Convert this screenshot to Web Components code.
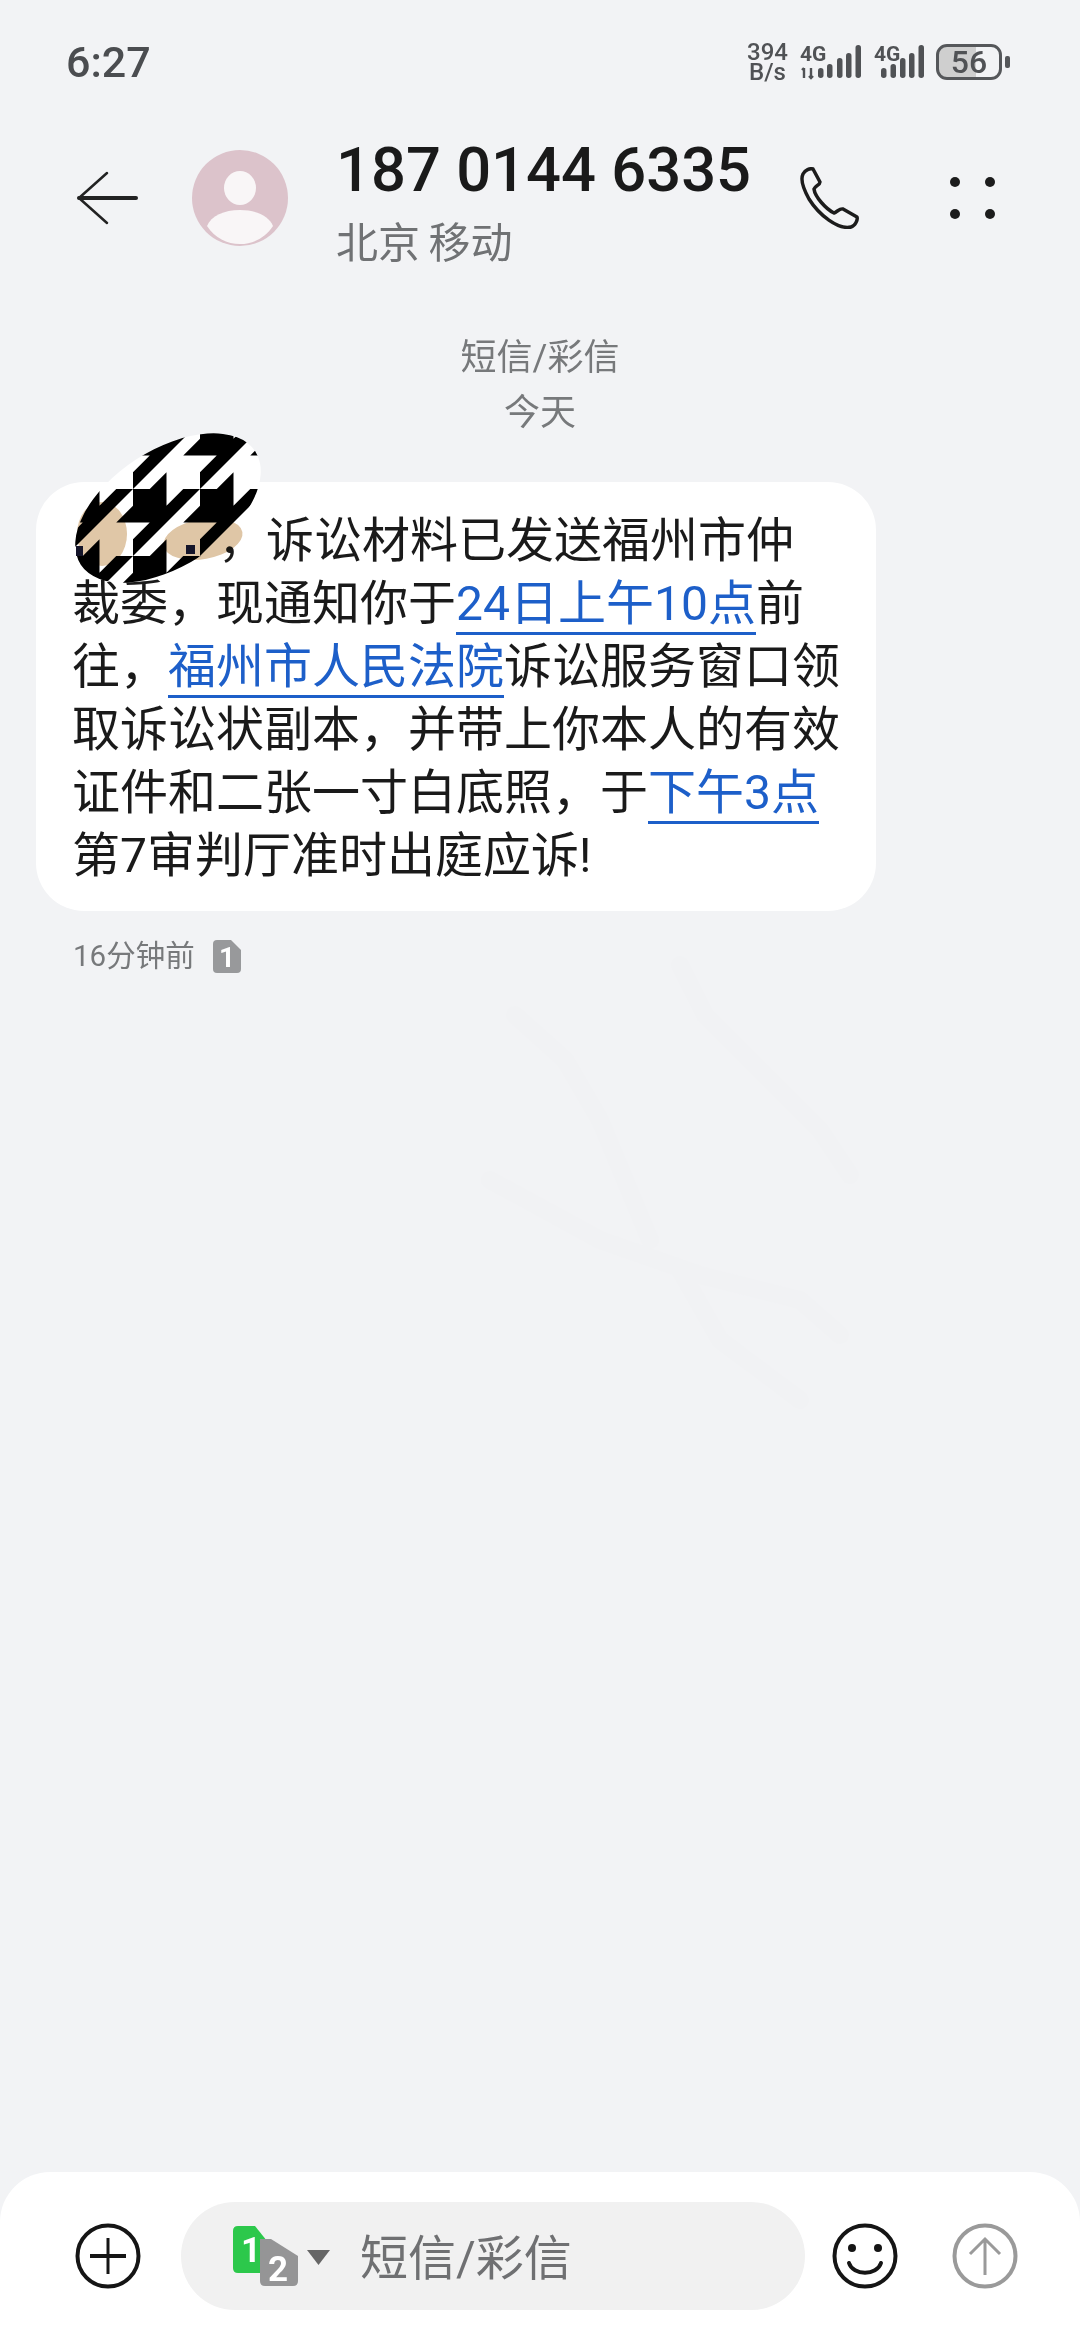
<!DOCTYPE html>
<html lang="zh">
<head>
<meta charset="utf-8">
<title>短信</title>
<style>
html, body { margin: 0; padding: 0; background: #f2f3f5; }
body { font-family: Roboto, "Noto Sans CJK SC", sans-serif; }
</style>
</head>
<body>
<sms-screen>
  <status-bar slot="top" time="6:27" speed="394" level="56"></status-bar>
  <thread-header slot="top" number="187 0144 6335" place="北京 移动"></thread-header>
  <day-label>短信/彩信</day-label>
  <day-label>今天</day-label>
  <message-bubble time="16分钟前">
    <span class="name"></span>，诉讼材料已发送福州市仲<br>裁委，现通知你于<msg-link>24日上午10点</msg-link>前往，<msg-link>福州市人民法院</msg-link>诉讼服务窗口领取诉讼状副本，并带上你本人的有效证件和二张一寸白底照，于<msg-link>下午3点</msg-link>第7审判厅准时出庭应诉!
  </message-bubble>
  <message-composer slot="bottom" placeholder="短信/彩信"></message-composer>
</sms-screen>

<script>
class SmsScreen extends HTMLElement {
  constructor() {
    super();
    const shadowRoot = this.attachShadow({mode: 'open'});
    shadowRoot.innerHTML = `
<style>
:host {
  display: flex;
  flex-direction: column;
  position: relative;
  width: 1080px;
  height: 2340px;
  overflow: hidden;
  background: #f2f3f5;
  font-family: Roboto, "Noto Sans CJK SC", sans-serif;
}
main {
  flex: 1;
  display: flex;
  flex-direction: column;
  padding-top: 59px;
}
.watermark { position: absolute; left: 0; top: 0; }
</style>
<svg class="watermark" width="1080" height="2340" fill="none" stroke="#f1f2f4" stroke-width="18" stroke-linecap="round" stroke-linejoin="round">
  <path d="M515 1015 565 1060 600 1120 650 1240"/>
  <path d="M680 965 705 1015 770 1080 820 1130 850 1175"/>
  <path d="M490 1180 600 1240 700 1275 800 1300 840 1335"/>
  <path d="M680 1270 720 1340 800 1400"/>
</svg>
<slot name="top"></slot>
<main><slot></slot></main>
<slot name="bottom"></slot>
`;
  }
}

class StatusBar extends HTMLElement {
  constructor() {
    super();
    const shadowRoot = this.attachShadow({mode: 'open'});
    const bars = (xs) => xs.map(([x, top]) =>
      `<rect x="${x}" y="${top}" width="5.5" height="${34 - top}" rx="2.7"/>`).join('');
    shadowRoot.innerHTML = `
<style>
:host {
  display: flex;
  align-items: center;
  justify-content: space-between;
  height: 124px;
  padding: 0 70px 0 66px;
  box-sizing: border-box;
  color: #505255;
}
.time { font-size: 43px; font-weight: 500; color: #4b4d50; }
.right { display: flex; align-items: center; gap: 12px; }
.speed {
  display: flex;
  flex-direction: column;
  align-items: center;
  font-size: 24px;
  line-height: 20px;
  font-weight: 500;
}
svg { display: block; fill: #505255; overflow: visible; }
svg text { font: 700 21px Roboto, sans-serif; }
.battery {
  position: relative;
  box-sizing: border-box;
  width: 66px;
  height: 36px;
  border: 3.5px solid #55575a;
  border-radius: 11px;
  display: flex;
  align-items: center;
  justify-content: center;
  font-size: 32px;
  font-weight: 500;
  background: linear-gradient(to right, #cfcfcf 62%, transparent 62%);
}
.nub { width: 5px; height: 12px; border-radius: 2px; background: #55575a; margin-left: -9px; }
</style>
<span class="time">${this.getAttribute('time')}</span>
<div class="right">
  <div class="speed"><span>${this.getAttribute('speed')}</span><span>B/s</span></div>
  <svg width="62" height="36" viewBox="0 0 62 36">
    <text x="0" y="17">4G</text>
    <path d="M4 24v10M2 26l2-2M11 24v10M9 32l2 2 2-2" stroke="#505255" stroke-width="2.4" fill="none"/>
    <g>${bars([[18, 24], [27, 20], [37, 14], [46, 9], [55.5, 1]])}</g>
  </svg>
  <svg width="50" height="36" viewBox="0 0 50 36">
    <text x="0" y="17">4G</text>
    <g>${bars([[7, 24], [16.5, 20], [26, 14], [35, 9], [44.5, 1]])}</g>
  </svg>
  <div class="battery">${this.getAttribute('level')}</div>
  <div class="nub"></div>
</div>
`;
  }
}

class ThreadHeader extends HTMLElement {
  constructor() {
    super();
    const shadowRoot = this.attachShadow({mode: 'open'});
    shadowRoot.innerHTML = `
<style>
:host {
  display: flex;
  align-items: center;
  height: 148px;
  padding-left: 76px;
  box-sizing: border-box;
}
svg { display: block; flex: none; }
.avatar { margin-left: 54px; }
.info { margin-left: 48px; width: 464px; }
.number {
  font-size: 61.5px;
  line-height: 70px;
  font-weight: 500;
  color: #1a1a1a;
  white-space: nowrap;
  margin-top: 8px;
}
.place { font-size: 42px; line-height: 52px; color: #707274; margin-top: 13px; word-spacing: -2px; }
.more { margin-left: 88px; }
</style>
<svg width="62" height="56" viewBox="0 0 62 56" fill="none" stroke="#222" stroke-linecap="round">
  <path d="M31 3 3 28" stroke-width="2.5"/>
  <path d="M3 28 31 53" stroke-width="2.5"/>
  <path d="M3 28H60" stroke-width="4"/>
</svg>
<svg class="avatar" width="96" height="96" viewBox="0 0 96 96">
  <circle cx="48" cy="48" r="48" fill="#dcc3cb"/>
  <ellipse cx="48" cy="38" rx="16" ry="17" fill="#f9f6f7"/>
  <path d="M15 76C19 66 32 60 48 60S77 66 81 76C73 88 61 94 48 94S23 88 15 76Z" fill="#f9f6f7"/>
</svg>
<div class="info">
  <div class="number">${this.getAttribute('number')}</div>
  <div class="place">${this.getAttribute('place')}</div>
</div>
<svg width="62" height="62" viewBox="0 0 62 62" fill="none" stroke="#1c1c1c" stroke-width="3.5" stroke-linejoin="round">
  <path d="M3 7C5 3 10 1 13 2L20 15C20 18 15 19 14 22C15 30 26 42 34 46C37 45 40 41 43 42L57 50C58 53 55 59 51 60C38 63 19 48 9 32C4 23 0 13 3 7Z"/>
</svg>
<svg class="more" width="46" height="44" viewBox="0 0 46 44" fill="#1c1c1c">
  <circle cx="5" cy="6" r="5"/><circle cx="40" cy="6" r="5"/>
  <circle cx="5" cy="38" r="5"/><circle cx="40" cy="38" r="5"/>
</svg>
`;
  }
}

class DayLabel extends HTMLElement {
  constructor() {
    super();
    const shadowRoot = this.attachShadow({mode: 'open'});
    shadowRoot.innerHTML = `
<style>
:host {
  display: block;
  text-align: center;
  font-size: 36px;
  line-height: 55px;
  color: #77797b;
}
</style>
<slot></slot>
`;
  }
}

class MsgLink extends HTMLElement {
  constructor() {
    super();
    const shadowRoot = this.attachShadow({mode: 'open'});
    // 改行を入れると空白が出るので詰めて書く
    shadowRoot.innerHTML = `<style>
:host {
  color: #1d5fc9;
  border-bottom: 3px solid #1d5fc9;
}
</style><slot></slot>`;
  }
}

class MessageBubble extends HTMLElement {
  constructor() {
    super();
    const shadowRoot = this.attachShadow({mode: 'open'});
    shadowRoot.innerHTML = `
<style>
:host {
  display: block;
  position: relative;
  margin: 41px 0 0 36px;
  width: 840px;
}
.bubble {
  box-sizing: border-box;
  background: #fff;
  border-radius: 48px;
  padding: 27px 30px 24px 36px;
  font-size: 48px;
  line-height: 63px;
  color: #1a1a1a;
}
::slotted(.name) { display: inline-block; width: 146px; }
.time {
  display: flex;
  align-items: center;
  gap: 18px;
  margin: 25px 0 0 37px;
  font-size: 29.5px;
  line-height: 40px;
  color: #77797b;
}
.mosaic { position: absolute; left: 30px; top: -50px; }
</style>
<div class="bubble"><slot></slot></div>
<div class="time">
  <span>${this.getAttribute('time')}</span>
  <svg width="28" height="33" viewBox="0 0 28 33" style="overflow:visible">
    <path d="M4 0H18L28 10V29Q28 33 24 33H4Q0 33 0 29V4Q0 0 4 0Z" fill="#98999b"/>
    <text x="14" y="27" text-anchor="middle" font-family="Roboto, sans-serif" font-size="28" font-weight="700" fill="#fff">1</text>
  </svg>
</div>
<svg class="mosaic" width="210" height="160" viewBox="0 0 210 160">
  <defs>
    <pattern id="tooth" width="67" height="67" patternUnits="userSpaceOnUse" patternTransform="translate(0,57)">
      <rect width="67" height="67" fill="#fff"/>
      <path d="M0 0H33.5V33.5H0Z M33.5 16.75 50.25 0H67L33.5 33.5Z M50.25 33.5 67 16.75V33.5Z M0 50.25 16.75 33.5H33.5L0 67Z M16.75 67 33.5 50.25V67Z"/>
    </pattern>
    <clipPath id="blot"><ellipse cx="102" cy="76" rx="104" ry="58" transform="rotate(-33 102 76)"/></clipPath>
  </defs>
  <g clip-path="url(#blot)"><rect width="210" height="160" fill="url(#tooth)"/></g>
  <g style="mix-blend-mode:multiply">
    <ellipse cx="36" cy="102" rx="25" ry="32" fill="#e0c7a7"/>
    <ellipse cx="137" cy="107" rx="40" ry="20" transform="rotate(-10 137 107)" fill="#dfc6a6"/>
  </g>
  <rect x="120" y="113" width="9" height="9" fill="#15152a"/>
  <rect x="10" y="114" width="7" height="10" fill="#15152a"/>
</svg>
`;
  }
}

class MessageComposer extends HTMLElement {
  constructor() {
    super();
    const shadowRoot = this.attachShadow({mode: 'open'});
    shadowRoot.innerHTML = `
<style>
:host {
  display: flex;
  align-items: flex-start;
  height: 168px;
  padding: 30px 64px 0 75px;
  box-sizing: border-box;
  background: #fff;
  border-radius: 50px 50px 0 0;
}
svg { display: block; flex: none; overflow: visible; }
.round { margin-top: 21px; }
.field {
  flex: none;
  width: 624px;
  height: 108px;
  margin: 0 27px 0 40px;
  padding-left: 52px;
  box-sizing: border-box;
  display: flex;
  align-items: center;
  border-radius: 54px;
  background: #f1f1f1;
  font-size: 48px;
  color: #6f7072;
}
.field span { margin-left: 30px; padding-bottom: 4px; }
.send { margin-left: 54px; }
</style>
<svg class="round" width="66" height="66" viewBox="0 0 66 66" fill="none" stroke="#151515">
  <circle cx="33" cy="33" r="30.5" stroke-width="4"/>
  <path d="M15 33H51" stroke-width="4"/>
  <path d="M33 15V51" stroke-width="3"/>
</svg>
<div class="field">
  <svg width="97" height="60" viewBox="0 0 97 60">
    <path d="M5 0H22L38 20V42Q38 47 33 47H5Q0 47 0 42V5Q0 0 5 0Z" fill="#2cc84b"/>
    <path d="M27 13H38L65 30V55Q65 60 60 60H32Q27 60 27 55Z" fill="#959596"/>
    <text x="18" y="36" text-anchor="middle" font-family="Roboto, sans-serif" font-size="35" font-weight="700" fill="#fff">1</text>
    <text x="45" y="55" text-anchor="middle" font-family="Roboto, sans-serif" font-size="35" font-weight="700" fill="#fff">2</text>
    <path d="M74 24H97L85.5 39Z" fill="#666"/>
  </svg>
  <span>${this.getAttribute('placeholder')}</span>
</div>
<svg class="round" width="66" height="66" viewBox="0 0 66 66" fill="none" stroke="#151515" stroke-width="4">
  <circle cx="33" cy="33" r="30.5"/>
  <circle cx="20" cy="25" r="4" fill="#151515" stroke="none"/>
  <circle cx="46" cy="25" r="4" fill="#151515" stroke="none"/>
  <path d="M17 40C21 53 45 53 49 40" stroke-linecap="round"/>
</svg>
<svg class="round send" width="66" height="66" viewBox="0 0 66 66" fill="none" stroke="#9a9a9a">
  <circle cx="33" cy="33" r="30.5" stroke-width="4"/>
  <path d="M33 16V52M18 31 33 16 48 31" stroke-width="3"/>
</svg>
`;
  }
}

customElements.define('sms-screen', SmsScreen);
customElements.define('status-bar', StatusBar);
customElements.define('thread-header', ThreadHeader);
customElements.define('day-label', DayLabel);
customElements.define('msg-link', MsgLink);
customElements.define('message-bubble', MessageBubble);
customElements.define('message-composer', MessageComposer);
</script>
</body>
</html>
